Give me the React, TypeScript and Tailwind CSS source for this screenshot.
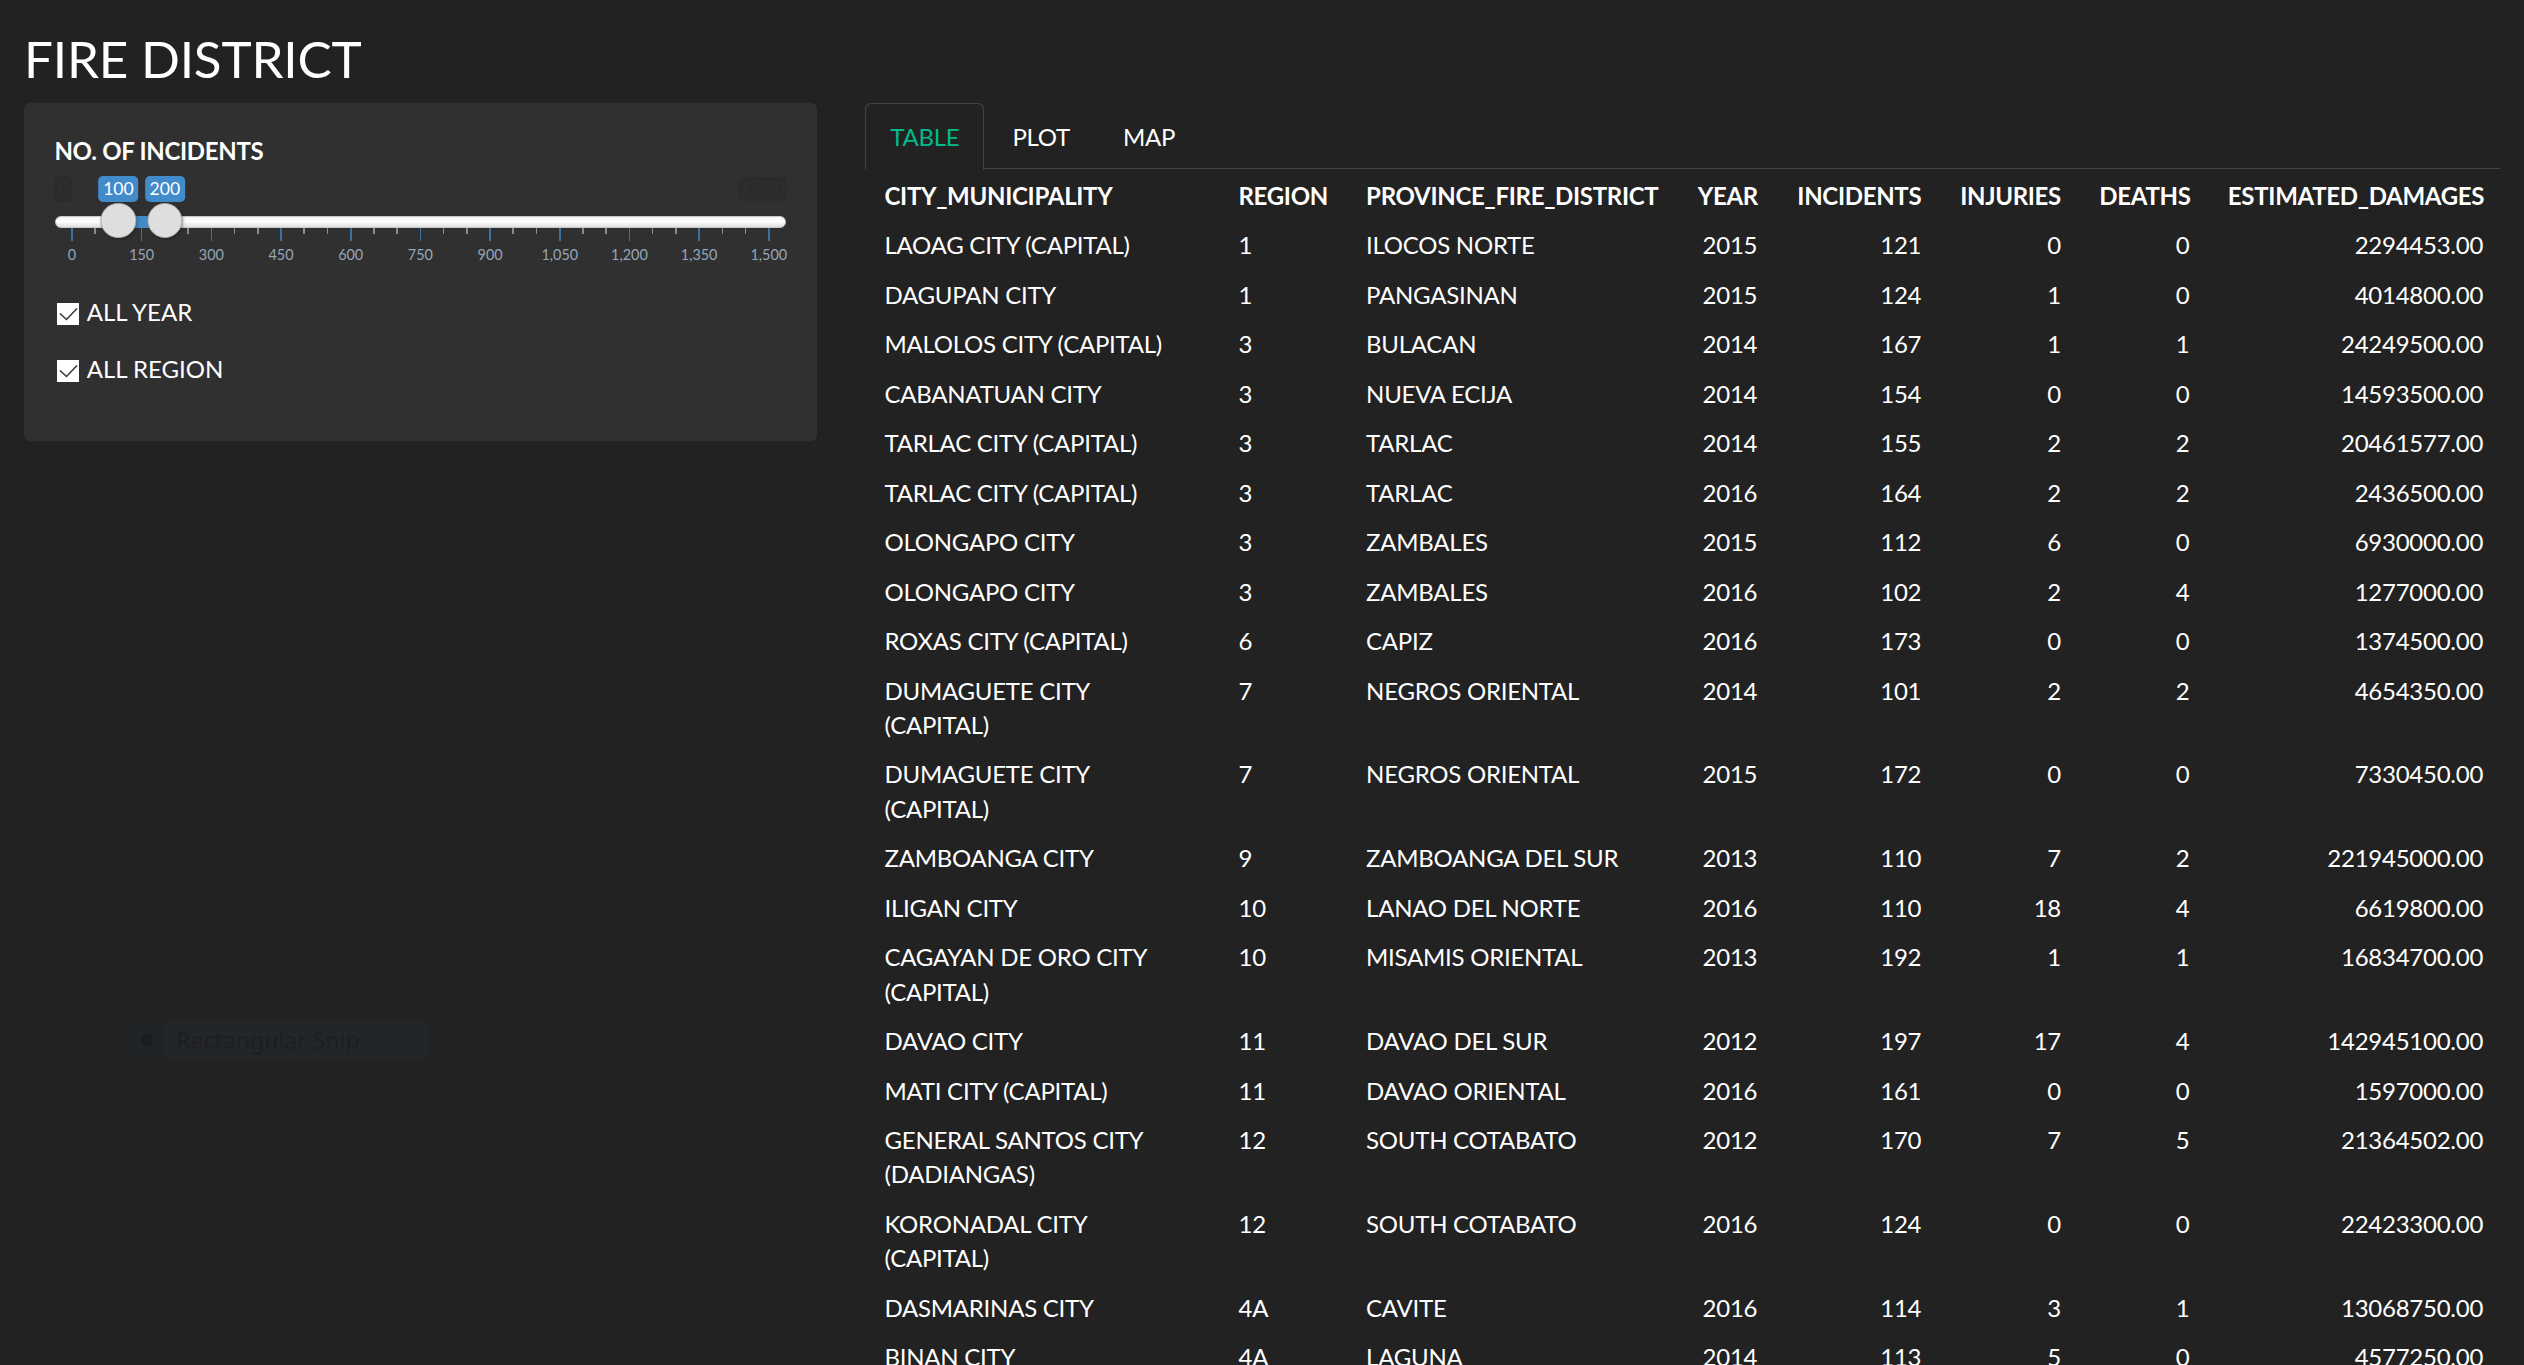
import React from "react";

type Row = [string, string, string, string, string, string, string, string];

const rows: Row[] = [
  ["LAOAG CITY (CAPITAL)", "1", "ILOCOS NORTE", "2015", "121", "0", "0", "2294453.00"],
  ["DAGUPAN CITY", "1", "PANGASINAN", "2015", "124", "1", "0", "4014800.00"],
  ["MALOLOS CITY (CAPITAL)", "3", "BULACAN", "2014", "167", "1", "1", "24249500.00"],
  ["CABANATUAN CITY", "3", "NUEVA ECIJA", "2014", "154", "0", "0", "14593500.00"],
  ["TARLAC CITY (CAPITAL)", "3", "TARLAC", "2014", "155", "2", "2", "20461577.00"],
  ["TARLAC CITY (CAPITAL)", "3", "TARLAC", "2016", "164", "2", "2", "2436500.00"],
  ["OLONGAPO CITY", "3", "ZAMBALES", "2015", "112", "6", "0", "6930000.00"],
  ["OLONGAPO CITY", "3", "ZAMBALES", "2016", "102", "2", "4", "1277000.00"],
  ["ROXAS CITY (CAPITAL)", "6", "CAPIZ", "2016", "173", "0", "0", "1374500.00"],
  ["DUMAGUETE CITY (CAPITAL)", "7", "NEGROS ORIENTAL", "2014", "101", "2", "2", "4654350.00"],
  ["DUMAGUETE CITY (CAPITAL)", "7", "NEGROS ORIENTAL", "2015", "172", "0", "0", "7330450.00"],
  ["ZAMBOANGA CITY", "9", "ZAMBOANGA DEL SUR", "2013", "110", "7", "2", "221945000.00"],
  ["ILIGAN CITY", "10", "LANAO DEL NORTE", "2016", "110", "18", "4", "6619800.00"],
  ["CAGAYAN DE ORO CITY (CAPITAL)", "10", "MISAMIS ORIENTAL", "2013", "192", "1", "1", "16834700.00"],
  ["DAVAO CITY", "11", "DAVAO DEL SUR", "2012", "197", "17", "4", "142945100.00"],
  ["MATI CITY (CAPITAL)", "11", "DAVAO ORIENTAL", "2016", "161", "0", "0", "1597000.00"],
  ["GENERAL SANTOS CITY (DADIANGAS)", "12", "SOUTH COTABATO", "2012", "170", "7", "5", "21364502.00"],
  ["KORONADAL CITY (CAPITAL)", "12", "SOUTH COTABATO", "2016", "124", "0", "0", "22423300.00"],
  ["DASMARINAS CITY", "4A", "CAVITE", "2016", "114", "3", "1", "13068750.00"],
  ["BINAN CITY", "4A", "LAGUNA", "2014", "113", "5", "0", "4577250.00"],
];

const headers = [
  "CITY_MUNICIPALITY",
  "REGION",
  "PROVINCE_FIRE_DISTRICT",
  "YEAR",
  "INCIDENTS",
  "INJURIES",
  "DEATHS",
  "ESTIMATED_DAMAGES",
];

// slider geometry: handle travel from 17.6px to 714.4px for 0..1500
const toX = (v: number) => 17.6 + (v * (714.4 - 17.6)) / 1500;
const ticks = Array.from({ length: 31 }, (_, i) => i * 50);
const fmt = (v: number) => v.toLocaleString("en-US");

const RangeSlider = () => {
  const lo = toX(100);
  const hi = toX(200);
  return (
    <div className="relative h-[94.8px]">
      {/* min / max labels (barely visible) */}
      <span className="absolute left-0 top-0 flex h-[25.7px] w-[18px] items-center justify-center rounded-[4.8px] bg-[#2b2b2b] text-[17.6px] text-[#2f2f2f]">
        0
      </span>
      <span className="absolute right-0 top-[0.7px] flex h-[24px] w-[48.4px] items-center justify-center rounded-[4.8px] bg-[#2b2b2b] text-[17.6px] text-[#2f2f2f]">
        1,500
      </span>

      {/* value badges */}
      <span
        className="absolute top-0 flex h-[25.7px] w-[39.7px] -translate-x-1/2 items-center justify-center rounded-[4.8px] bg-[#428bca] text-[17.6px] leading-none text-white"
        style={{ left: lo }}
      >
        100
      </span>
      <span
        className="absolute top-0 flex h-[25.7px] w-[39.7px] -translate-x-1/2 items-center justify-center rounded-[4.8px] bg-[#428bca] text-[17.6px] leading-none text-white"
        style={{ left: hi }}
      >
        200
      </span>

      {/* track */}
      <div className="absolute left-[0.6px] right-[0.6px] top-[40px] h-[12px] rounded-full border border-[#c9c9c9] bg-[linear-gradient(to_bottom,#f4f4f4,#ffffff_45%,#dedede)]" />
      <div
        className="absolute top-[40px] h-[12px] bg-[#428bca]"
        style={{ left: lo, width: hi - lo }}
      />

      {/* grid */}
      {ticks.map((v) => {
        const major = v % 150 === 0;
        return (
          <div
            key={v}
            className={`absolute top-[51.7px] w-[1.6px] ${
              major ? "h-[13px] bg-[#3f6f9c]" : "h-[6.4px] bg-[#8a8a8a]"
            }`}
            style={{ left: toX(v) - 0.8 }}
          />
        );
      })}
      {ticks
        .filter((v) => v % 150 === 0)
        .map((v) => (
          <span
            key={`t-${v}`}
            className="absolute top-[72.5px] -translate-x-1/2 text-[14.4px] leading-[14.4px] text-[#95a5b8]"
            style={{ left: toX(v) }}
          >
            {fmt(v)}
          </span>
        ))}

      {/* handles */}
      {[lo, hi].map((x, i) => (
        <div
          key={i}
          className="absolute top-[27.1px] h-[35.2px] w-[35.2px] -translate-x-1/2 rounded-full border border-[#a9a9a9] bg-[#dedede] shadow-[1px_1px_3px_rgba(0,0,0,0.35)]"
          style={{ left: x }}
        />
      ))}
    </div>
  );
};

const Check = ({ label }: { label: string }) => (
  <label className="flex items-start text-[24px] leading-[34.3px]">
    <span className="ml-[2.6px] mt-[8.2px] flex h-[22px] w-[22px] items-center justify-center bg-white">
      <svg viewBox="0 0 22 22" className="h-[22px] w-[22px]">
        <path
          d="M3 10.5 L9.5 16.5 L20 5.5"
          fill="none"
          stroke="#3a3a3a"
          strokeWidth="1.6"
        />
      </svg>
    </span>
    <span className="ml-[7.7px]">{label}</span>
  </label>
);

const Tabs = () => (
  <ul className="flex border-b-[1.6px] border-[#444444]">
    {["TABLE", "PLOT", "MAP"].map((t, i) => (
      <li key={t} className="-mb-[1.6px] mr-[3.2px]">
        <a
          className={`block rounded-t-[6.4px] border-[1.6px] px-[24px] pb-[14.6px] pt-[15.8px] text-[24px] leading-[34.3px] tracking-[-0.3px] ${
            i === 0
              ? "border-[#444444] border-b-transparent bg-[#222222] text-[#00bc8c]"
              : "border-transparent text-white"
          }`}
        >
          {t}
        </a>
      </li>
    ))}
  </ul>
);

const colWidths = [
  "w-[354px]",
  "w-[127.6px]",
  "w-[331.6px]",
  "w-[98px]",
  "w-[164px]",
  "w-[139.7px]",
  "w-[128.5px]",
  "w-auto",
];

export default function App() {
  return (
    <div className="relative min-h-screen bg-[#222222] px-[24px] pt-[30.4px] font-['Lato',sans-serif] text-white">
      <h2 className="mb-[16.6px] text-[51.2px] font-normal leading-[56.3px] tracking-[-0.2px]">
        FIRE DISTRICT
      </h2>

      <div className="flex gap-x-[48px]">
        {/* Sidebar */}
        <aside className="w-[793.3px] shrink-0">
          <div className="rounded-[6.4px] bg-[#303030] px-[30.4px] pb-[54.6px] pt-[30.4px]">
            <div className="mb-[8px] text-[24px] font-bold leading-[34.3px] tracking-[-0.3px]">
              NO. OF INCIDENTS
            </div>
            <RangeSlider />
            <div className="mt-[24px] flex flex-col gap-[22.7px]">
              <Check label="ALL YEAR" />
              <Check label="ALL REGION" />
            </div>
          </div>
        </aside>

        {/* Main */}
        <main className="min-w-0 flex-1">
          <Tabs />
          <table className="mt-[1.9px] w-[1637px] table-fixed border-collapse text-[24px] leading-[34.3px]">
            <colgroup>
              {colWidths.map((w, i) => (
                <col key={i} className={w} />
              ))}
            </colgroup>
            <thead>
              <tr>
                {headers.map((h, i) => (
                  <th
                    key={h}
                    className={`px-[19.2px] py-[7.6px] font-bold tracking-[-0.3px] ${
                      i < 3 ? "text-left" : "text-right"
                    }`}
                  >
                    {h}
                  </th>
                ))}
              </tr>
            </thead>
            <tbody>
              {rows.map((r, ri) => (
                <tr key={ri}>
                  {r.map((c, ci) => (
                    <td
                      key={ci}
                      className={`py-[7.6px] align-top tracking-[-0.25px] ${
                        ci === 0 ? "pl-[19.2px] pr-[34px]" : "px-[19.2px]"
                      } ${ci < 3 ? "text-left" : "text-right"}`}
                    >
                      {c}
                    </td>
                  ))}
                </tr>
              ))}
            </tbody>
          </table>
        </main>
      </div>

      {/* faint snipping-tool hint left on the screen */}
      <div className="absolute left-[128.3px] top-[1021px] flex h-[38px] w-[300px] items-center bg-[#232629]">
        <span className="flex h-[38px] w-[37px] items-center justify-center bg-[#212427]">
          <span className="h-[12px] w-[12px] rounded-full bg-[#1d1d1d]" />
        </span>
        <span className="ml-[11px] font-['Noto_Sans',sans-serif] text-[23px] text-[#1e1e1e]">
          Rectangular Snip
        </span>
      </div>
    </div>
  );
}
